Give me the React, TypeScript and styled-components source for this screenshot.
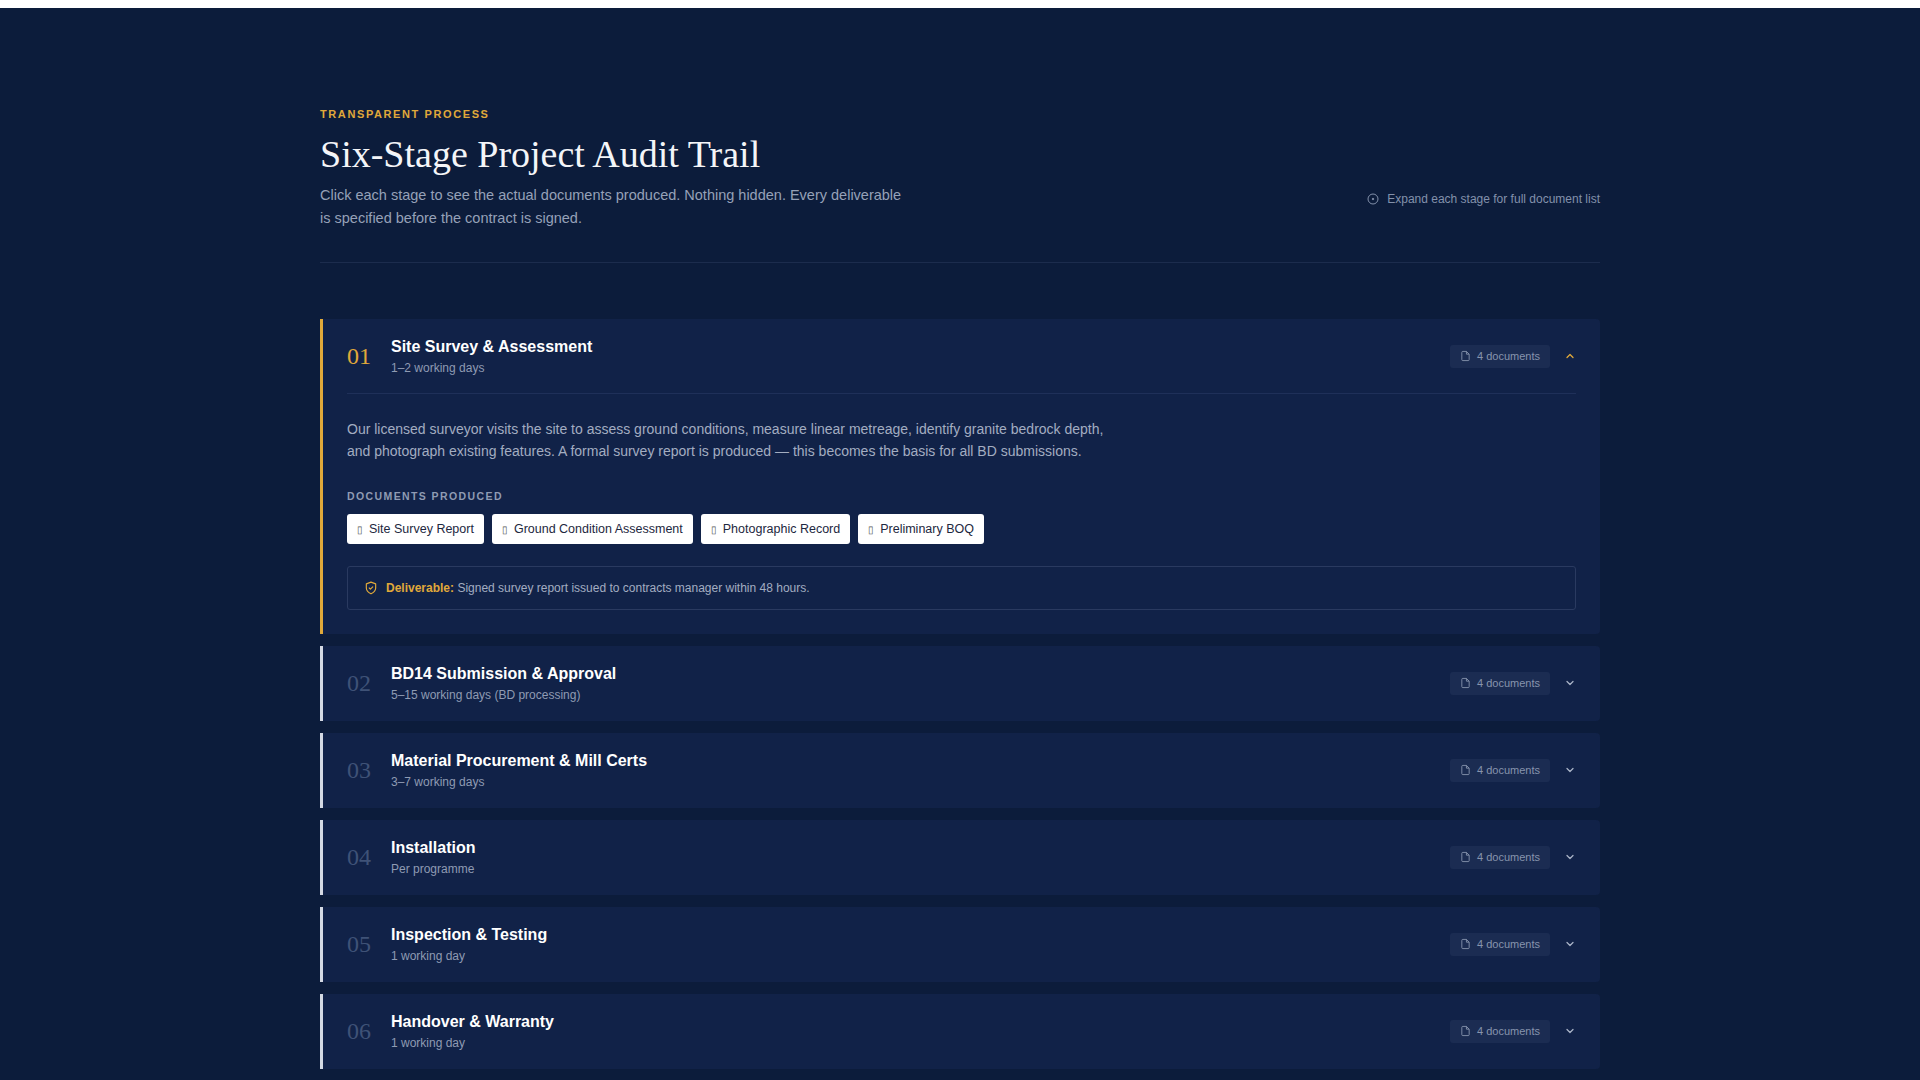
import React, { useState } from "react";
import styled, { createGlobalStyle } from "styled-components";

const Global = createGlobalStyle`
  html, body { margin: 0; padding: 0; background: #ffffff; }
  body { padding-top: 8px; font-family: "Liberation Sans", Arial, sans-serif; }
  * { box-sizing: border-box; }
`;

const Page = styled.main`
  background: #0c1c3b;
  min-height: 1072px;
  padding: 100px 0 40px;
`;
const Container = styled.div`
  width: 1280px;
  margin: 0 auto;
`;
const Head = styled.header`
  display: flex;
  justify-content: space-between;
  align-items: flex-end;
  padding-bottom: 32px;
  border-bottom: 1px solid #1c2c4d;
  margin-bottom: 56px;
`;
const Eyebrow = styled.div`
  color: #e0a93a;
  font-size: 11px;
  font-weight: 700;
  letter-spacing: 1.6px;
  text-transform: uppercase;
`;
const Title = styled.h1`
  font-family: "Liberation Serif", "Times New Roman", serif;
  font-weight: 400;
  font-size: 38px;
  color: #f4f5f8;
  margin: 12px 0 8px;
`;
const Lead = styled.p`
  color: #96a1b8;
  font-size: 14.5px;
  line-height: 23px;
  margin: 0;
  max-width: 590px;
`;
const Hint = styled.div`
  display: flex;
  align-items: center;
  gap: 8px;
  color: #8391ab;
  font-size: 12px;
  margin-bottom: 24px;
`;
const List = styled.div`
  display: flex;
  flex-direction: column;
  gap: 12px;
`;
const Card = styled.section<{ $open: boolean }>`
  background: #112248;
  border-left: 3px solid ${p => (p.$open ? "#e0a93a" : "#d4d9e3")};
  border-radius: 0 4px 4px 0;
`;
const Header = styled.button<{ $open: boolean }>`
  all: unset;
  cursor: pointer;
  display: flex;
  align-items: center;
  width: calc(100% - 48px);
  margin: 0 24px;
  height: ${p => (p.$open ? 74 : 74)}px;
  border-bottom: 1px solid ${p => (p.$open ? "#1f3059" : "transparent")};
`;
const Num = styled.span<{ $open: boolean }>`
  font-family: "Liberation Serif", "Times New Roman", serif;
  font-size: 24px;
  width: 44px;
  color: ${p => (p.$open ? "#e0a93a" : "#3f5277")};
`;
const Info = styled.div`
  flex: 1;
  display: flex;
  flex-direction: column;
  gap: 5px;
`;
const StageTitle = styled.span`
  color: #ffffff;
  font-weight: 700;
  font-size: 16px;
`;
const Sub = styled.span`
  color: #8f9bb3;
  font-size: 12px;
`;
const Badge = styled.span`
  display: inline-flex;
  align-items: center;
  gap: 6px;
  background: #1b2c52;
  color: #8794ad;
  font-size: 11px;
  height: 23px;
  padding: 0 10px;
  border-radius: 3px;
`;
const Chev = styled.span<{ $open: boolean }>`
  display: inline-flex;
  margin-left: 14px;
  color: ${p => (p.$open ? "#e0a93a" : "#aab4c7")};
`;
const Body = styled.div`
  padding: 24px 24px 24px 24px;
`;
const Desc = styled.p`
  margin: 0 0 28px;
  color: #a3adc1;
  font-size: 14px;
  line-height: 22px;
  max-width: 770px;
`;
const Label = styled.div`
  color: #8f9bb3;
  font-size: 10.5px;
  font-weight: 700;
  letter-spacing: 1.4px;
  margin-bottom: 12px;
`;
const Chips = styled.div`
  display: flex;
  gap: 8px;
  margin-bottom: 22px;
`;
const Chip = styled.span`
  display: inline-flex;
  align-items: center;
  gap: 6px;
  background: #ffffff;
  color: #1d2740;
  font-size: 12.5px;
  height: 30px;
  padding: 0 10px;
  border-radius: 3px;
`;
const Box = styled.div`
  display: flex;
  align-items: center;
  gap: 8px;
  border: 1px solid #2a3a60;
  border-radius: 3px;
  height: 44px;
  padding: 0 20px 0 16px;
  color: #a3adc1;
  font-size: 12px;
`;
const Strong = styled.b`
  color: #e0a93a;
`;

const DocIcon = () => (
  <svg width="11" height="12" viewBox="0 0 24 24" fill="none" stroke="currentColor" strokeWidth="2" strokeLinejoin="round">
    <path d="M14 2H6a2 2 0 0 0-2 2v16a2 2 0 0 0 2 2h12a2 2 0 0 0 2-2V8z" />
    <path d="M14 2v6h6" />
  </svg>
);
const ChevIcon = ({ up }: { up: boolean }) => (
  <svg width="12" height="12" viewBox="0 0 24 24" fill="none" stroke="currentColor" strokeWidth="2.5" strokeLinecap="round" strokeLinejoin="round">
    <path d={up ? "M6 15l6-6 6 6" : "M6 9l6 6 6-6"} />
  </svg>
);

const stages = [
  ["01", "Site Survey & Assessment", "1–2 working days"],
  ["02", "BD14 Submission & Approval", "5–15 working days (BD processing)"],
  ["03", "Material Procurement & Mill Certs", "3–7 working days"],
  ["04", "Installation", "Per programme"],
  ["05", "Inspection & Testing", "1 working day"],
  ["06", "Handover & Warranty", "1 working day"],
];
const docs = ["Site Survey Report", "Ground Condition Assessment", "Photographic Record", "Preliminary BOQ"];

export default function App() {
  const [open, setOpen] = useState(0);
  return (
    <Page>
      <Global />
      <Container>
        <Head>
          <div>
            <Eyebrow>Transparent Process</Eyebrow>
            <Title>Six-Stage Project Audit Trail</Title>
            <Lead>
              Click each stage to see the actual documents produced. Nothing hidden. Every deliverable is specified before the contract is signed.
            </Lead>
          </div>
          <Hint>
            <svg width="12" height="12" viewBox="0 0 24 24" fill="none" stroke="currentColor" strokeWidth="2">
              <circle cx="12" cy="12" r="10" />
              <circle cx="12" cy="12" r="1.5" fill="currentColor" />
            </svg>
            Expand each stage for full document list
          </Hint>
        </Head>
        <List>
          {stages.map(([n, t, s], i) => {
            const isOpen = open === i;
            return (
              <Card key={n} $open={isOpen}>
                <Header $open={isOpen} onClick={() => setOpen(isOpen ? -1 : i)}>
                  <Num $open={isOpen}>{n}</Num>
                  <Info>
                    <StageTitle>{t}</StageTitle>
                    <Sub>{s}</Sub>
                  </Info>
                  <Badge>
                    <DocIcon />4 documents
                  </Badge>
                  <Chev $open={isOpen}>
                    <ChevIcon up={isOpen} />
                  </Chev>
                </Header>
                {isOpen && (
                  <Body>
                    <Desc>
                      Our licensed surveyor visits the site to assess ground conditions, measure linear metreage, identify granite bedrock depth, and photograph existing features. A formal survey report is produced — this becomes the basis for all BD submissions.
                    </Desc>
                    <Label>DOCUMENTS PRODUCED</Label>
                    <Chips>
                      {docs.map(d => (
                        <Chip key={d}>
                          <span style={{ fontSize: 10, color: "#555" }}>▯</span>
                          {d}
                        </Chip>
                      ))}
                    </Chips>
                    <Box>
                      <svg width="14" height="14" viewBox="0 0 24 24" fill="none" stroke="#e0a93a" strokeWidth="2" strokeLinecap="round" strokeLinejoin="round">
                        <path d="M12 22s8-4 8-10V5l-8-3-8 3v7c0 6 8 10 8 10z" />
                        <path d="M9 12l2 2 4-4" />
                      </svg>
                      <span>
                        <Strong>Deliverable:</Strong> Signed survey report issued to contracts manager within 48 hours.
                      </span>
                    </Box>
                  </Body>
                )}
              </Card>
            );
          })}
        </List>
      </Container>
    </Page>
  );
}
